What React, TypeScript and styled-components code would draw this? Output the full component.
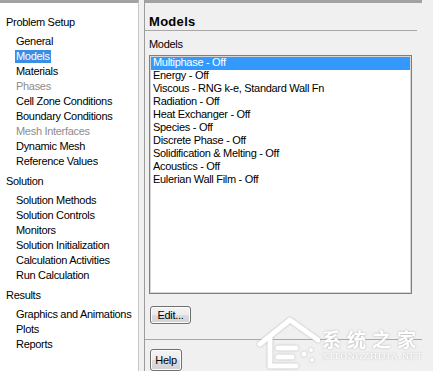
import React from "react";
import styled, { createGlobalStyle } from "styled-components";

const Global = createGlobalStyle`
  html, body { margin: 0; padding: 0; }
  body {
    width: 433px; height: 371px; overflow: hidden;
    background: #f0f0f0;
    font-family: "Liberation Sans", Arial, sans-serif;
    font-size: 11px; letter-spacing: -0.3px; color: #000;
  }
  #root { height: 371px; }
`;

const Page = styled.div`
  position: relative;
  display: flex;
  height: 371px;
  background: #f0f0f0;
  overflow: hidden;
`;

const Tree = styled.nav`
  flex: none;
  width: 139px;
  box-sizing: border-box;
  background: #fff;
  border-top: 3px solid #a2a2a2;
  border-right: 1px solid #c8c8c8;
  padding: 12px 0 0 0;
  display: flex;
  flex-direction: column;
  gap: 5px;
`;

const Group = styled.div`
  display: flex;
  flex-direction: column;
`;

const GroupTitle = styled.div`
  line-height: 15px;
  height: 15px;
  padding-left: 6px;
  margin-bottom: 4px;
  white-space: nowrap;
`;

const Item = styled.div<{ $disabled?: boolean }>`
  line-height: 15px;
  height: 15px;
  padding-left: 15px;
  white-space: nowrap;
  color: ${(p) => (p.$disabled ? "#8d8d8d" : "#000")};
`;

const ItemLabel = styled.span<{ $selected?: boolean }>`
  display: inline-block;
  line-height: 13px;
  padding: 0 1px;
  background: ${(p) => (p.$selected ? "#3a8fe4" : "transparent")};
  color: ${(p) => (p.$selected ? "#fff" : "inherit")};
`;

const Spacer = styled.div`
  flex: none;
  width: 5px;
`;

const Panel = styled.section`
  flex: none;
  width: 278px;
  box-sizing: border-box;
  border-top: 3px solid #a2a2a2;
  border-left: 1px solid #9c9c9c;
  display: flex;
  flex-direction: column;
`;

const Header = styled.h1`
  margin: 0 5px 0 0;
  padding: 11px 0 0 4px;
  height: 16px;
  line-height: 16px;
  font-size: 13px;
  font-weight: bold;
  letter-spacing: 0.3px;
  border-bottom: 1px solid #a8a8a8;
`;

const Body = styled.div`
  display: flex;
  flex-direction: column;
  padding: 7px 10px 0 4px;
`;

const FieldLabel = styled.div`
  line-height: 13px;
  height: 13px;
  margin-bottom: 4px;
`;

const ListBox = styled.ul`
  margin: 0;
  padding: 1px;
  list-style: none;
  height: 239px;
  box-sizing: border-box;
  background: #fff;
  border: 1px solid #7e7e7e;
  box-shadow: inset 0 0 0 1px #d6d6d6;
`;

const ListRow = styled.li<{ $selected?: boolean }>`
  height: 13px;
  line-height: 11px;
  padding: 0 0 2px 2px;
  box-sizing: border-box;
  white-space: nowrap;
  background: ${(p) => (p.$selected ? "#3399ff" : "transparent")};
  color: ${(p) => (p.$selected ? "#fff" : "#000")};
`;

const Button = styled.button<{ $w: number }>`
  width: ${(p) => p.$w}px;
  height: 18px;
  padding: 0 0 1px 0;
  font: inherit;
  letter-spacing: -0.3px;
  color: #000;
  border: 1px solid #707070;
  border-radius: 3px;
  background: linear-gradient(#f4f4f4 0%, #ebebeb 50%, #dcdcdc 51%, #d2d2d2 100%);
  box-shadow: inset 0 0 0 1px #fcfcfc;
  text-align: center;
`;

const EditRow = styled.div`
  padding: 12px 0 0 5px;
  height: 38px;
`;

const Footer = styled.div`
  border-top: 1px solid #a8a8a8;
  padding: 9px 0 0 5px;
  flex: 1;
`;

const HelpButton = styled(Button)`
  height: 22px;
`;

const Watermark = styled.div`
  position: absolute;
  left: 256px;
  top: 314px;
  display: flex;
  align-items: flex-start;
  gap: 2px;
  pointer-events: none;
  filter: drop-shadow(0 0 1px #b4b4b4);
`;

const WmText = styled.div`
  display: flex;
  flex-direction: column;
  padding-top: 15px;
`;

const WmTitle = styled.div`
  font-family: "Noto Sans CJK SC", sans-serif;
  font-size: 19px;
  font-weight: bold;
  line-height: 19px;
  height: 19px;
  letter-spacing: 6px;
  color: #fff;
`;

const WmSub = styled.div`
  font-family: "Liberation Serif", serif;
  font-size: 9px;
  line-height: 9px;
  height: 9px;
  margin-top: 4px;
  letter-spacing: 1.2px;
  color: #fff;
`;

const tree = [
  {
    title: "Problem Setup",
    items: [
      ["General"],
      ["Models", "sel"],
      ["Materials"],
      ["Phases", "dis"],
      ["Cell Zone Conditions"],
      ["Boundary Conditions"],
      ["Mesh Interfaces", "dis"],
      ["Dynamic Mesh"],
      ["Reference Values"],
    ],
  },
  {
    title: "Solution",
    items: [
      ["Solution Methods"],
      ["Solution Controls"],
      ["Monitors"],
      ["Solution Initialization"],
      ["Calculation Activities"],
      ["Run Calculation"],
    ],
  },
  {
    title: "Results",
    items: [["Graphics and Animations"], ["Plots"], ["Reports"]],
  },
];

const models = [
  "Multiphase - Off",
  "Energy - Off",
  "Viscous - RNG k-e, Standard Wall Fn",
  "Radiation - Off",
  "Heat Exchanger - Off",
  "Species - Off",
  "Discrete Phase - Off",
  "Solidification & Melting - Off",
  "Acoustics - Off",
  "Eulerian Wall Film - Off",
];

export default function App() {
  return (
    <>
      <Global />
      <Page>
        <Tree>
          {tree.map((g) => (
            <Group key={g.title}>
              <GroupTitle>{g.title}</GroupTitle>
              {g.items.map(([label, flag]) => (
                <Item key={label} $disabled={flag === "dis"}>
                  <ItemLabel $selected={flag === "sel"}>{label}</ItemLabel>
                </Item>
              ))}
            </Group>
          ))}
        </Tree>
        <Spacer />
        <Panel>
          <Header>Models</Header>
          <Body>
            <FieldLabel>Models</FieldLabel>
            <ListBox>
              {models.map((m, i) => (
                <ListRow key={m} $selected={i === 0}>
                  {m}
                </ListRow>
              ))}
            </ListBox>
          </Body>
          <EditRow>
            <Button $w={41}>Edit...</Button>
          </EditRow>
          <Footer>
            <HelpButton $w={32}>Help</HelpButton>
          </Footer>
        </Panel>
        <Watermark>
          <svg width="64" height="56" viewBox="0 0 64 56">
            <g fill="none" stroke="#fff" strokeWidth="5" strokeLinejoin="round" strokeLinecap="round">
              <path d="M4 30 L34 6 L62 26" />
              <path d="M14 24 L14 52 L40 52" />
              <path d="M22 34 L40 34" />
              <path d="M22 43 L36 43" />
            </g>
            <g fill="#fff">
              <circle cx="48" cy="40" r="2.5" />
              <circle cx="55" cy="36" r="2" />
              <circle cx="56" cy="46" r="2" />
            </g>
          </svg>
          <WmText>
            <WmTitle>系统之家</WmTitle>
            <WmSub>XITONGZHIJIA.NET</WmSub>
          </WmText>
        </Watermark>
      </Page>
    </>
  );
}
